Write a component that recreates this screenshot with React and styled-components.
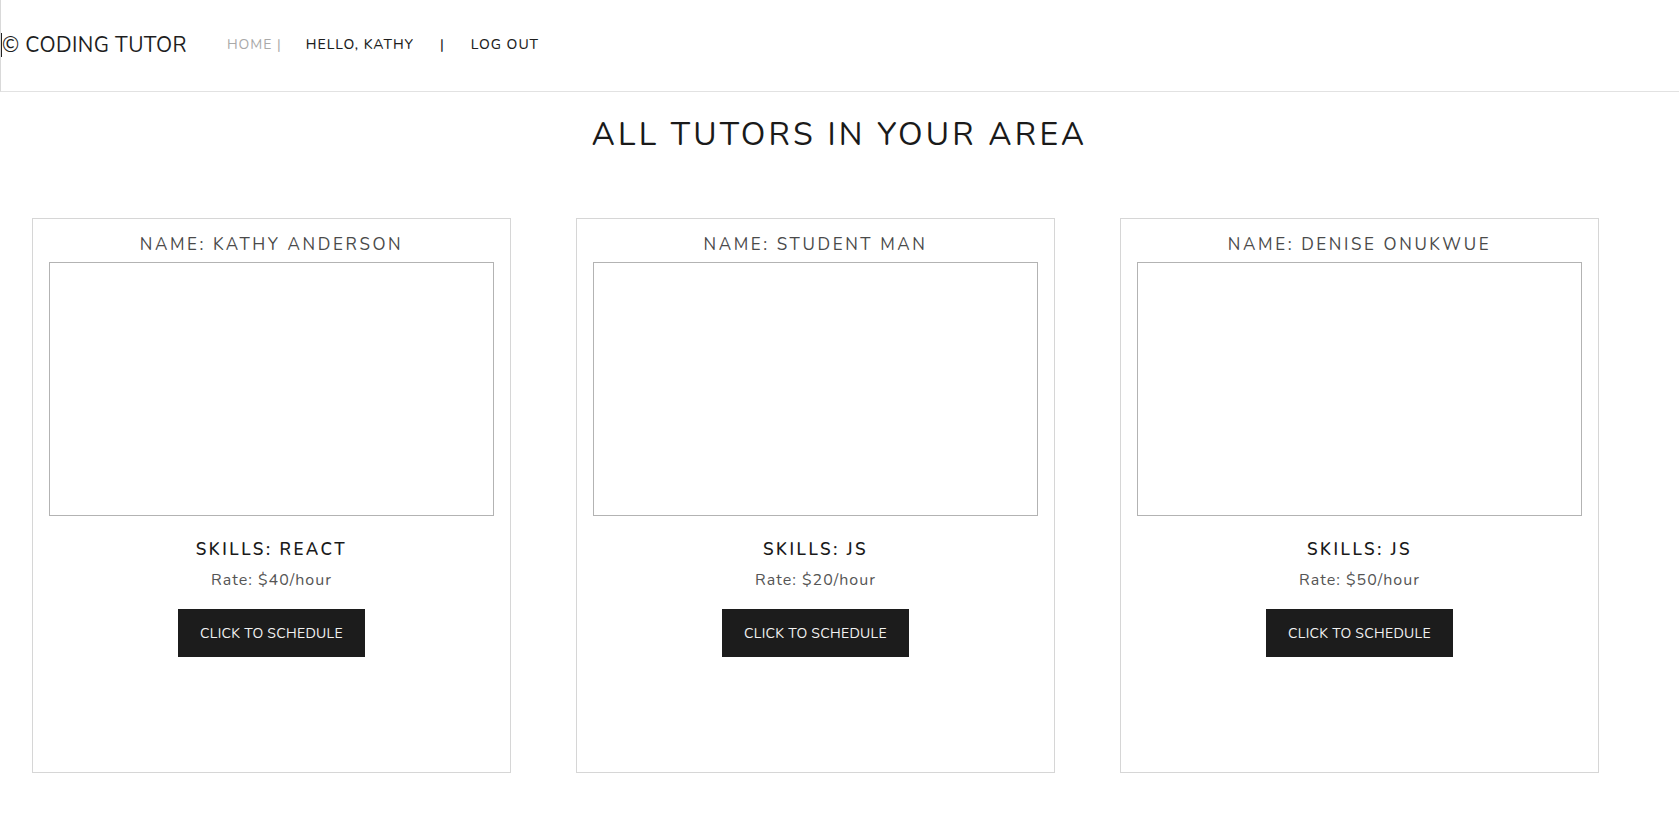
import React from 'react';
import styled, { createGlobalStyle } from 'styled-components';

const GlobalStyle = createGlobalStyle`
  html, body {
    margin: 0;
    padding: 0;
    background: #fff;
  }
  body {
    font-family: 'Nunito', 'Lato', 'Noto Sans', sans-serif;
    color: #222;
  }
  * {
    box-sizing: border-box;
  }
`;

const Header = styled.header`
  height: 92px;
  display: flex;
  align-items: center;
  border-left: 1px solid #d9d9d9;
  border-bottom: 1px solid #e2e2e2;
  padding-bottom: 2px;
`;

const Caret = styled.span`
  display: inline-block;
  width: 1px;
  height: 24px;
  background: #222;
`;

const Logo = styled.div`
  display: flex;
  align-items: center;
  font-size: 21px;
  letter-spacing: 0.4px;
  color: #1e1e1e;
  margin-right: 40px;
`;

const Nav = styled.nav`
  display: flex;
  align-items: center;
  font-size: 14px;
  letter-spacing: 1px;
`;

const NavItem = styled.span`
  color: ${({ $muted }) => ($muted ? '#a9a9a9' : '#1e1e1e')};
  font-weight: ${({ $muted }) => ($muted ? 400 : 500)};
  margin-right: ${({ $gap }) => $gap || 0}px;
`;

const PageTitle = styled.h1`
  margin: 21px 0 0;
  text-align: center;
  font-weight: 400;
  font-size: 32px;
  letter-spacing: 3.2px;
  color: #1a1a1a;
`;

const CardRow = styled.div`
  display: flex;
  gap: 65px;
  padding: 0 32px;
  margin-top: 62px;
`;

const Card = styled.div`
  width: 479px;
  height: 555px;
  border: 1px solid #d6d6d6;
  display: flex;
  flex-direction: column;
  align-items: center;
  padding: 15px 16px 0;
`;

const Name = styled.div`
  font-size: 17px;
  letter-spacing: 2.6px;
  color: #4a4a4a;
  line-height: 22px;
  margin-bottom: 6px;
`;

const Photo = styled.div`
  width: 100%;
  height: 254px;
  border: 1px solid #b3b3b3;
`;

const Skills = styled.div`
  margin-top: 23px;
  font-size: 17px;
  font-weight: 600;
  letter-spacing: 2.5px;
  color: #1a1a1a;
  line-height: 22px;
`;

const Rate = styled.div`
  margin-top: 8px;
  font-size: 16px;
  letter-spacing: 1px;
  color: #555;
  line-height: 22px;
`;

const ScheduleButton = styled.button`
  margin-top: 18px;
  width: 187px;
  height: 48px;
  border: none;
  background: #1c1c1c;
  color: #f2f2f2;
  font-family: inherit;
  font-size: 14px;
  letter-spacing: 0.3px;
  cursor: pointer;
`;

const tutors = [
  { name: 'KATHY ANDERSON', skills: 'REACT', rate: 40 },
  { name: 'STUDENT MAN', skills: 'JS', rate: 20 },
  { name: 'DENISE ONUKWUE', skills: 'JS', rate: 50 },
];

export default function App() {
  return (
    <>
      <GlobalStyle />
      <Header>
        <Logo>
          <Caret />© CODING TUTOR
        </Logo>
        <Nav>
          <NavItem $muted $gap={24}>HOME |</NavItem>
          <NavItem $gap={26}>HELLO, KATHY</NavItem>
          <NavItem $gap={26}>|</NavItem>
          <NavItem>LOG OUT</NavItem>
        </Nav>
      </Header>
      <PageTitle>ALL TUTORS IN YOUR AREA</PageTitle>
      <CardRow>
        {tutors.map((t) => (
          <Card key={t.name}>
            <Name>NAME: {t.name}</Name>
            <Photo />
            <Skills>SKILLS: {t.skills}</Skills>
            <Rate>Rate: ${t.rate}/hour</Rate>
            <ScheduleButton>CLICK TO SCHEDULE</ScheduleButton>
          </Card>
        ))}
      </CardRow>
    </>
  );
}
